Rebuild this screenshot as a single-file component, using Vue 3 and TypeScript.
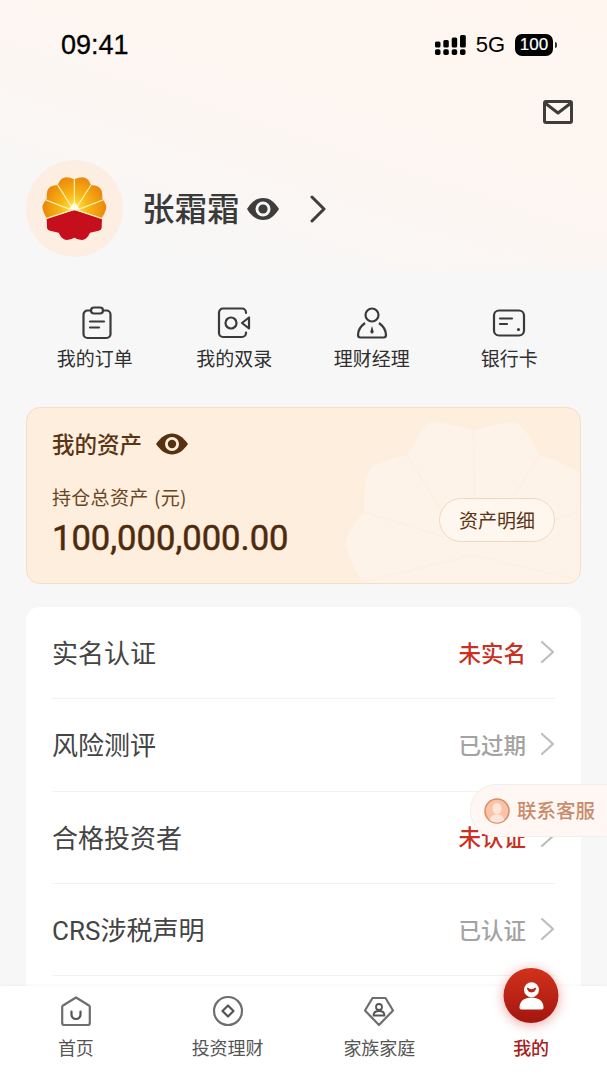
<template>
  <div class="page">
    <div class="main">
      <!-- 状态栏 -->
      <div class="status-bar">
        <span class="time">09:41</span>
        <div class="status-right">
          <svg class="signal" width="31" height="20" viewBox="0 0 31 20">
            <g fill="#000">
              <rect x="0" y="6.500" width="5.500" height="6" rx="1.500" />
              <rect x="0" y="14.200" width="5.500" height="5.800" rx="1.800" />
              <rect x="8.300" y="5" width="5.500" height="7.500" rx="1.500" />
              <rect x="8.300" y="14.200" width="5.500" height="5.800" rx="1.800" />
              <rect x="16.700" y="2.500" width="5.500" height="10" rx="1.500" />
              <rect x="16.700" y="14.200" width="5.500" height="5.800" rx="1.800" />
              <rect x="25" y="0" width="5.800" height="12.500" rx="1.500" />
              <rect x="25" y="14.200" width="5.500" height="5.800" rx="1.800" />
            </g>
          </svg>
          <span class="net">5G</span>
          <span class="battery">100</span>
          <i class="battery-nub"></i>
        </div>
      </div>

      <div class="mail-row">
        <svg width="30" height="24" viewBox="0 0 30 24" fill="none" stroke="#3d3d3d" stroke-width="3">
          <rect x="1.500" y="1.500" width="27" height="21" rx="1.500" />
          <path d="M2 3l13 10L28 3" stroke-linejoin="round" />
        </svg>
      </div>

      <!-- 用户信息 -->
      <div class="profile">
        <div class="avatar">
          <svg width="70" height="66.700" viewBox="60 75 210 200">
            <defs>
              <radialGradient id="sun" gradientUnits="userSpaceOnUse" cx="163" cy="172" r="100">
                <stop offset="0" stop-color="#ffe94f" />
                <stop offset="0.4" stop-color="#f9b716" />
                <stop offset="1" stop-color="#e8830b" />
              </radialGradient>
            </defs>
            <path
              fill="url(#sun)"
              d="M163 88Q138 76 125 86Q117 92 113 105Q88 106 82 122Q79 134 80 147Q64 165 68 178Q72 192 80 205L163 178L245 205Q254 192 258 178Q262 165 247 147Q248 134 245 122Q238 106 213 105Q209 92 201 86Q188 76 163 88Z"
            />
            <path
              fill="#c60f1c"
              d="M80 205L163 180L246 205L245 234Q244 240 236 242L210 248Q200 270 186 270Q172 268 163 263Q154 268 140 270Q126 270 116 248L90 242Q82 240 81 234Z"
            />
            <path
              d="M163 172V86M156 172L113 105M170 172L213 105M150 178L78 150M176 178L248 150M78 206L163 178L247 206"
              stroke="#fff3b8"
              stroke-width="3.500"
              fill="none"
            />
            <path d="M163 156L180 178L163 181L146 178Z" fill="#fffbe0" />
          </svg>
        </div>
        <span class="name">张霜霜</span>
        <svg class="name-eye" width="34" height="24" viewBox="0 0 34 24">
          <path d="M1 12C6 4 11 1 17 1s11 3 16 11c-5 8-10 11-16 11S6 20 1 12Z" fill="#3d3d3d" />
          <circle cx="17" cy="12" r="7.500" fill="#f8f6f4" />
          <circle cx="17" cy="12" r="4.600" fill="#3d3d3d" />
        </svg>
        <svg class="name-arrow" width="16" height="28" viewBox="0 0 16 28" fill="none" stroke="#3d3d3d" stroke-width="3" stroke-linecap="round" stroke-linejoin="round">
          <path d="M2 2l12 12L2 26" />
        </svg>
      </div>

      <!-- 快捷入口 -->
      <div class="shortcuts">
        <div class="shortcut">
          <svg width="34" height="34" viewBox="0 0 34 34" fill="none" stroke="#3a3a3a" stroke-width="2.200" stroke-linecap="round">
            <path d="M11 4.500H7.500a4 4 0 0 0-4 4V28a4 4 0 0 0 4 4h19a4 4 0 0 0 4-4V8.500a4 4 0 0 0-4-4H23" />
            <rect x="11" y="1.500" width="12" height="6" rx="3" />
            <path d="M10 15.500h14M10 21.500h9" />
          </svg>
          <span>我的订单</span>
        </div>
        <div class="shortcut">
          <svg width="34" height="34" viewBox="0 0 34 34" fill="none" stroke="#3a3a3a" stroke-width="2.200" stroke-linejoin="round">
            <path d="M29 7V6.500a4 4 0 0 0-4-4H6a4 4 0 0 0-4 4V27a4 4 0 0 0 4 4h19a4 4 0 0 0 4-4v-.5" stroke-linecap="round" />
            <circle cx="14" cy="17" r="5.500" />
            <path d="M32 11.500v11L25 17Z" />
          </svg>
          <span>我的双录</span>
        </div>
        <div class="shortcut">
          <svg width="34" height="34" viewBox="0 0 34 34" fill="none" stroke="#3a3a3a" stroke-width="2.200" stroke-linejoin="round">
            <circle cx="17" cy="9" r="6.500" />
            <path d="M10 17C6 20 3 25 3 29c0 1.500 1 2.500 2.500 2.500h23c1.500 0 2.500-1 2.500-2.500 0-4-3-9-7-12" />
            <path d="M17 20l-1.800 6 1.800 2 1.800-2Z" fill="#3a3a3a" stroke="none" />
          </svg>
          <span>理财经理</span>
        </div>
        <div class="shortcut">
          <svg width="34" height="34" viewBox="0 0 34 34" fill="none" stroke="#3a3a3a" stroke-width="2.200" stroke-linecap="round">
            <rect x="2" y="4.500" width="30" height="25" rx="5" />
            <path d="M8 12.500h12M8 18h7" />
            <circle cx="26.500" cy="23.500" r="1.600" fill="#3a3a3a" stroke="none" />
          </svg>
          <span>银行卡</span>
        </div>
      </div>

      <!-- 资产卡片 -->
      <div class="asset-card">
        <svg class="watermark" width="245" height="182" viewBox="0 0 735 546">
          <path
            fill="#fff"
            fill-opacity="0.3"
            d="M400 75C340 60 290 45 265 55C240 70 225 120 200 150C160 160 105 175 90 190C70 230 72 290 70 320C50 350 15 390 15 420C25 460 55 500 70 546H735V210C680 180 640 160 600 150C580 120 560 70 530 55C500 45 450 65 400 75Z"
          />
          <path
            d="M400 75L405 290M200 150L320 340M70 320L310 395M600 150L510 290M715 320L500 395M70 530L400 450L735 530"
            stroke="#fdeede"
            stroke-opacity="0.7"
            stroke-width="5"
            fill="none"
          />
        </svg>
        <div class="asset-title">
          <span>我的资产</span>
          <svg width="34" height="22" viewBox="0 0 34 22">
            <path d="M1 11C6 4 11 .5 17 .5S28 4 33 11c-5 7-10 10.500-16 10.500S6 18 1 11Z" fill="#56300f" />
            <circle cx="17" cy="11" r="7" fill="#fdeede" />
            <circle cx="17" cy="11" r="4.200" fill="#56300f" />
          </svg>
        </div>
        <div class="asset-bottom">
          <div>
            <div class="asset-label">持仓总资产 (元)</div>
            <div class="asset-value">100,000,000.00</div>
          </div>
          <div class="asset-btn">资产明细</div>
        </div>
      </div>

      <!-- 认证列表 -->
      <div class="menu-card">
        <div v-for="item in menuItems" :key="item.label" class="menu-row">
          <span class="menu-label">{{ item.label }}</span>
          <span class="menu-value" :class="{ warn: item.warn }">{{ item.value }}</span>
          <svg width="15" height="24" viewBox="0 0 15 24" fill="none" stroke="#bdbdbd" stroke-width="2.200" stroke-linecap="round" stroke-linejoin="round">
            <path d="M2 2l11 10L2 22" />
          </svg>
        </div>
      </div>
    </div>

    <!-- 悬浮客服 -->
    <div class="service">
      <svg width="26" height="26" viewBox="0 0 26 26">
        <circle cx="13" cy="13" r="12" fill="#f8c3a6" stroke="#dc8b5f" stroke-width="1.500" />
        <ellipse cx="13" cy="10.500" rx="4.500" ry="5.500" fill="#fde6d9" />
        <path d="M5.500 22c1-4 4-5.500 7.500-5.500s6.500 1.500 7.500 5.500a12 12 0 0 1-15 0Z" fill="#fde6d9" />
      </svg>
      <span>联系客服</span>
    </div>

    <!-- 底部导航 -->
    <div class="tabbar">
      <div class="tab">
        <svg width="32" height="32" viewBox="0 0 32 32" fill="none" stroke="#6e6e6e" stroke-width="2.200" stroke-linejoin="round" stroke-linecap="round">
          <path d="M16 2.500L29 10.500a1.500 1.500 0 0 1 .8 1.300V28a2 2 0 0 1-2 2H4.200a2 2 0 0 1-2-2V11.800a1.500 1.500 0 0 1 .8-1.300Z" />
          <path d="M11.500 16.500v3a4.500 4.500 0 0 0 9 0v-3" stroke="#555" />
        </svg>
        <span>首页</span>
      </div>
      <div class="tab">
        <svg width="32" height="32" viewBox="0 0 32 32" fill="none" stroke="#6e6e6e" stroke-width="2.200" stroke-linejoin="round">
          <circle cx="16" cy="16" r="14" />
          <path d="M16 10.500L21.500 16 16 21.500 10.500 16Z" stroke="#555" />
        </svg>
        <span>投资理财</span>
      </div>
      <div class="tab">
        <svg width="32" height="32" viewBox="0 0 32 32" fill="none" stroke="#6e6e6e" stroke-width="2.200" stroke-linejoin="round">
          <path d="M9.500 3h13L30 15.500 16 30 2 15.500Z" />
          <circle cx="16" cy="12" r="3" stroke="#555" stroke-width="1.800" />
          <path d="M10.500 20.500c0-3 2-4.500 5.500-4.500s5.500 1.500 5.500 4.500Z" stroke="#555" stroke-width="1.800" />
        </svg>
        <span>家族家庭</span>
      </div>
      <div class="tab active">
        <div class="me-btn">
          <svg width="28" height="32" viewBox="0 0 28 32">
            <circle cx="14" cy="9.800" r="7.500" fill="#fff" />
            <path d="M10 8a4 4 0 0 0 8 0 6 6 0 0 1-8 0Z" fill="#b8201a" stroke="#b8201a" stroke-width="1" />
            <path d="M4 29.500C2.500 29.500 2 28.500 2 27.500 2 21 7 17.500 14 17.500S26 21 26 27.500C26 28.500 25.500 29.500 24 29.500Z" fill="#fff" />
          </svg>
        </div>
        <span>我的</span>
      </div>
    </div>
  </div>
</template>

<script setup lang="ts">
interface MenuItem {
  label: string;
  value: string;
  warn?: boolean;
}

const menuItems: MenuItem[] = [
  { label: "实名认证", value: "未实名", warn: true },
  { label: "风险测评", value: "已过期" },
  { label: "合格投资者", value: "未认证", warn: true },
  { label: "CRS涉税声明", value: "已认证" },
];
</script>

<style>
body {
  margin: 0;
  background: #f7f7f7;
}
</style>

<style scoped>
.page {
  position: relative;
  width: 607px;
  height: 1080px;
  display: flex;
  flex-direction: column;
  overflow: hidden;
  background: linear-gradient(198deg, #fff6f0 0%, #fef6f1 40%, #f7f7f7 88%) no-repeat;
  background-size: 100% 270px;
  background-color: #f7f7f7;
  font-family: "Noto Sans CJK SC", sans-serif;
}

.main {
  flex: 1;
  min-height: 0;
  overflow: hidden;
}

.status-bar {
  height: 90px;
  padding: 0 50px 0 61px;
  display: flex;
  align-items: center;
  justify-content: space-between;
  color: #000;
}

.time {
  font-family: "Liberation Sans", sans-serif;
  font-size: 27px;
  line-height: 1;
  -webkit-text-stroke: 0.3px #000;
}

.status-right {
  display: flex;
  align-items: center;
}

.signal {
  margin-top: -1px;
}

.net {
  margin-left: 10px;
  font-family: "Liberation Sans", sans-serif;
  font-size: 22px;
  line-height: 1;
}

.battery {
  margin-left: 10px;
  width: 38px;
  height: 22px;
  border-radius: 7px;
  background: #000;
  color: #fff;
  font-family: "Liberation Sans", sans-serif;
  font-size: 17px;
  line-height: 22px;
  text-align: center;
  -webkit-text-stroke: 0.2px #fff;
}

.battery-nub {
  width: 2px;
  height: 6px;
  margin-left: 2px;
  border-radius: 0 2px 2px 0;
  background: #333;
}

.mail-row {
  margin-top: 10px;
  height: 24px;
  padding-right: 34px;
  display: flex;
  justify-content: flex-end;
}

.profile {
  margin-top: 36px;
  padding-left: 26px;
  height: 97px;
  display: flex;
  align-items: center;
}

.avatar {
  width: 97px;
  height: 97px;
  border-radius: 50%;
  background: radial-gradient(circle, #fff1dc 0%, #fdeee2 60%, #fbeee6 100%);
  display: flex;
  align-items: center;
  justify-content: center;
}

.name {
  margin: -3px 0 0 19px;
  font-size: 32.500px;
  font-weight: 500;
  line-height: 40px;
  color: #3a3a3a;
}

.name-eye {
  margin-left: 6px;
}

.name-arrow {
  margin-left: 30px;
}

.shortcuts {
  margin-top: 49px;
  padding: 0 29px 0 28px;
  display: grid;
  grid-template-columns: repeat(4, 1fr);
}

.shortcut {
  display: flex;
  flex-direction: column;
  align-items: center;
  gap: 4px;
  font-size: 19px;
  line-height: 27px;
  color: #2f2f2f;
}

.shortcut:first-child span {
  margin-right: 4px;
}

.asset-card {
  position: relative;
  margin: 36px 26px 0;
  height: 177px;
  box-sizing: border-box;
  padding: 21px 25px 0;
  border: 1px solid #f5dfc5;
  border-radius: 14px;
  background: #fdeede;
  overflow: hidden;
}

.watermark {
  position: absolute;
  left: 313px;
  top: -3px;
}

.asset-title {
  position: relative;
  display: flex;
  align-items: center;
  gap: 13px;
  font-size: 22.500px;
  font-weight: 500;
  line-height: 28px;
  color: #5a3413;
}

.asset-title svg {
  margin-top: 2px;
}

.asset-bottom {
  position: relative;
  margin-top: 27px;
  display: flex;
  justify-content: space-between;
  align-items: flex-start;
}

.asset-label {
  font-size: 19px;
  line-height: 26px;
  letter-spacing: 0.3px;
  word-spacing: 1px;
  color: #6b4523;
}

.asset-value {
  margin-top: 8px;
  font-family: Roboto, sans-serif;
  font-size: 34.600px;
  font-weight: 400;
  line-height: 40px;
  color: #4f2a0c;
  -webkit-text-stroke: 0.5px #4f2a0c;
}

.asset-btn {
  margin-top: 14px;
  width: 116px;
  height: 44px;
  box-sizing: border-box;
  border: 1.500px solid #f1d9bf;
  border-radius: 22px;
  background: rgba(255, 255, 255, 0.35);
  font-size: 19px;
  line-height: 41px;
  text-align: center;
  color: #5a3413;
}

.menu-card {
  margin: 23px 26px 0;
  min-height: 400px;
  padding: 0 26px;
  border-radius: 14px;
  background: #fff;
}

.menu-row {
  height: 92.330px;
  box-sizing: border-box;
  padding-bottom: 2px;
  border-bottom: 1px solid #f2f2f2;
  display: flex;
  align-items: center;
}

.menu-label {
  flex: 1;
  font-family: Roboto, "Noto Sans CJK SC", sans-serif;
  font-size: 26px;
  color: #444;
}

.menu-value {
  margin-right: 14px;
  font-size: 22.500px;
  font-weight: 500;
  color: #a3a3a3;
}

.menu-value.warn {
  color: #c9301f;
}

.service {
  position: absolute;
  right: 0;
  top: 784px;
  width: 137px;
  height: 53px;
  box-sizing: border-box;
  padding-left: 13px;
  display: flex;
  align-items: center;
  gap: 7px;
  border: 1px solid #f2eeea;
  border-right: none;
  border-radius: 26px 0 0 26px;
  background: #fff7f3;
  font-size: 19.500px;
  font-weight: 500;
  color: #c98b6b;
}

.service span {
  margin-top: -2px;
}

.tabbar {
  position: relative;
  height: 94px;
  flex-shrink: 0;
  display: grid;
  grid-template-columns: repeat(4, 1fr);
  background: #fff;
  box-shadow: 0 -1px 3px rgba(0, 0, 0, 0.03);
}

.tab {
  position: relative;
  padding-top: 9px;
  display: flex;
  flex-direction: column;
  align-items: center;
  font-size: 18px;
  line-height: 26px;
  color: #555;
}

.tab span {
  margin-top: 7px;
}

.tab.active {
  padding-top: 41px;
  font-weight: 500;
  color: #a8201a;
}

.me-btn {
  position: absolute;
  left: 50%;
  top: -18px;
  transform: translateX(-50%);
  width: 55px;
  height: 55px;
  border-radius: 50%;
  background: linear-gradient(180deg, #d2321c 0%, #a3150e 100%);
  box-shadow: 0 2px 12px rgba(205, 45, 30, 0.42);
  display: flex;
  align-items: center;
  justify-content: center;
}
</style>
